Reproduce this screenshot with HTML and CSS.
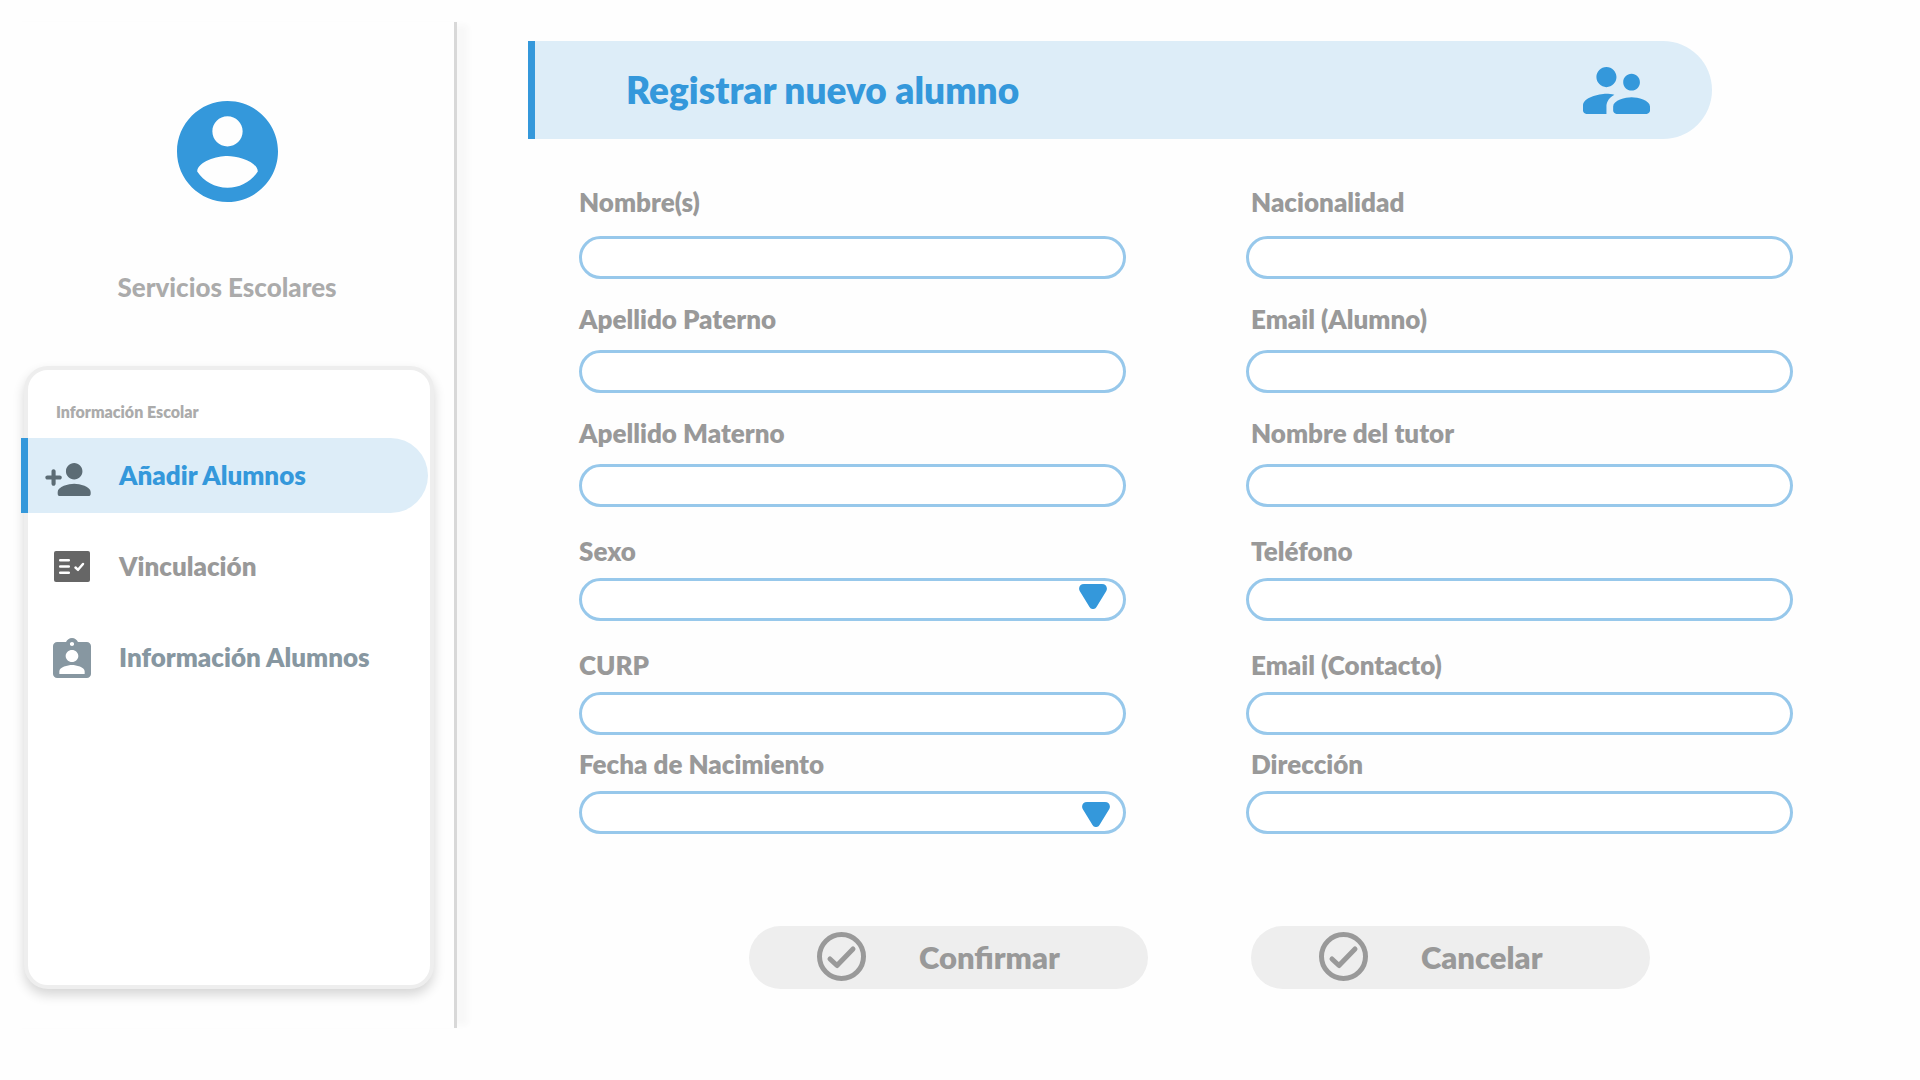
FILE: index.html
```html
<!DOCTYPE html>
<html lang="es">
<head>
<meta charset="utf-8">
<meta name="viewport" content="width=device-width, initial-scale=1">
<title>Registrar nuevo alumno</title>
<link rel="stylesheet" href="styles.css">
</head>
<body>
<div class="page">
  <aside class="sidebar">
    <div class="profile">
      <svg class="profile-icon" viewBox="2 2 20 20" aria-hidden="true"><path d="M12 2C6.48 2 2 6.48 2 12s4.48 10 10 10 10-4.48 10-10S17.52 2 12 2zm0 3c1.66 0 3 1.34 3 3s-1.34 3-3 3-3-1.34-3-3 1.34-3 3-3zm0 14.2c-2.5 0-4.71-1.28-6-3.22.03-1.99 4-3.08 6-3.08 1.99 0 5.97 1.09 6 3.08-1.29 1.94-3.5 3.22-6 3.22z"/></svg>
      <p class="profile-name">Servicios Escolares</p>
    </div>
    <nav class="menu" aria-labelledby="menu-title">
      <h2 class="menu-title" id="menu-title">Información Escolar</h2>
      <a class="menu-item menu-item-active" href="#alumnos" aria-current="page">
        <span class="menu-icon"><svg width="46" height="33" viewBox="1 4 22 16" aria-hidden="true"><path d="M15 12c2.21 0 4-1.79 4-4s-1.79-4-4-4-4 1.79-4 4 1.79 4 4 4zm-9-2V8c0-.55-.45-1-1-1s-1 .45-1 1v2H2c-.55 0-1 .45-1 1s.45 1 1 1h2v2c0 .55.45 1 1 1s1-.45 1-1v-2h2c.55 0 1-.45 1-1s-.45-1-1-1H6zm9 4c-2.67 0-8 1.34-8 4v1c0 .55.45 1 1 1h14c.55 0 1-.45 1-1v-1c0-2.66-5.33-4-8-4z"/></svg></span>
        <span class="menu-label">Añadir Alumnos</span>
      </a>
      <a class="menu-item" href="#vinculacion">
        <span class="menu-icon"><svg width="38" height="31" viewBox="-1 0 38 31" aria-hidden="true"><rect width="36" height="31" rx="2"/><path class="mark" d="M6.200 9.200h8.600M6.200 15.500h8.600M6.200 21.800h8.600M21.500 16.500l2.500 2.300 5-5.800"/></svg></span>
        <span class="menu-label">Vinculación</span>
      </a>
      <a class="menu-item menu-item-info" href="#informacion">
        <span class="menu-icon"><svg width="38" height="40" viewBox="3 1 18 20" preserveAspectRatio="none" aria-hidden="true"><path d="M19 3h-4.180C14.400 1.840 13.300 1 12 1s-2.400.84-2.820 2H5c-1.100 0-2 .9-2 2v14c0 1.100.9 2 2 2h14c1.100 0 2-.9 2-2V5c0-1.100-.9-2-2-2zm-7 0c.55 0 1 .45 1 1s-.45 1-1 1-1-.45-1-1 .45-1 1-1zm0 4c1.660 0 3 1.340 3 3s-1.340 3-3 3-3-1.340-3-3 1.340-3 3-3zm6 12H6v-1.400c0-2 4-3.100 6-3.100s6 1.100 6 3.100V19z"/></svg></span>
        <span class="menu-label">Información Alumnos</span>
      </a>
    </nav>
  </aside>

  <main class="content">
    <header class="banner">
      <h1 class="banner-title">Registrar nuevo alumno</h1>
      <svg class="banner-icon" viewBox="2 5 20 14" aria-hidden="true"><path d="M16.500 12c1.380 0 2.490-1.120 2.490-2.500S17.880 7 16.500 7 14 8.120 14 9.500s1.120 2.500 2.500 2.500zM9 11c1.660 0 2.990-1.340 2.990-3S10.660 5 9 5 6 6.340 6 8s1.340 3 3 3zm7.500 3c-1.830 0-5.500.92-5.500 2.750V18c0 .55.45 1 1 1h9c.55 0 1-.45 1-1v-1.250c0-1.830-3.670-2.750-5.500-2.750zM9 13c-2.330 0-7 1.170-7 3.500V18c0 .55.45 1 1 1h6v-2.250c0-.85.33-2.340 2.370-3.470C10.500 13.100 9.660 13 9 13z"/></svg>
    </header>

    <form class="form">
      <div class="fields">
        <div class="field field-loose"><label for="nombre">Nombre(s)</label><input class="control" id="nombre" type="text"></div>
        <div class="field field-loose"><label for="nacionalidad">Nacionalidad</label><input class="control" id="nacionalidad" type="text"></div>
        <div class="field"><label for="paterno">Apellido Paterno</label><input class="control" id="paterno" type="text"></div>
        <div class="field"><label for="email-alumno">Email (Alumno)</label><input class="control" id="email-alumno" type="email"></div>
        <div class="field"><label for="materno">Apellido Materno</label><input class="control" id="materno" type="text"></div>
        <div class="field"><label for="tutor">Nombre del tutor</label><input class="control" id="tutor" type="text"></div>
        <div class="field field-tight"><label for="sexo">Sexo</label>
          <div class="select"><select class="control" id="sexo"><option></option></select>
            <svg class="arrow" viewBox="0 0 28 25" aria-hidden="true"><path d="M5 0h18c4 0 6 3.500 4.300 7L17.500 23c-1.500 2.700-5.500 2.700-7 0L.7 7C-1 3.500 1 0 5 0z"/></svg></div>
        </div>
        <div class="field field-tight"><label for="telefono">Teléfono</label><input class="control" id="telefono" type="tel"></div>
        <div class="field field-tight"><label for="curp">CURP</label><input class="control" id="curp" type="text"></div>
        <div class="field field-tight"><label for="email-contacto">Email (Contacto)</label><input class="control" id="email-contacto" type="email"></div>
        <div class="field field-tight"><label for="fecha">Fecha de Nacimiento</label>
          <div class="select"><select class="control" id="fecha"><option></option></select>
            <svg class="arrow arrow-low" viewBox="0 0 28 25" aria-hidden="true"><path d="M5 0h18c4 0 6 3.500 4.300 7L17.500 23c-1.500 2.700-5.500 2.700-7 0L.7 7C-1 3.500 1 0 5 0z"/></svg></div>
        </div>
        <div class="field field-tight"><label for="direccion">Dirección</label><input class="control" id="direccion" type="text"></div>
      </div>

      <div class="actions">
        <button class="button" type="button">
          <svg class="button-icon" viewBox="0 0 49 49" aria-hidden="true"><circle cx="24.500" cy="24.500" r="22"/><path d="M13 27l7 6.500L36 17"/></svg>
          <span>Confirmar</span>
        </button>
        <button class="button" type="button">
          <svg class="button-icon" viewBox="0 0 49 49" aria-hidden="true"><circle cx="24.500" cy="24.500" r="22"/><path d="M13 27l7 6.500L36 17"/></svg>
          <span>Cancelar</span>
        </button>
      </div>
    </form>
  </main>
</div>
</body>
</html>
```
FILE: styles.css
```css
:root {
  --blue: #3498db;
  --blue-soft: #ddedf8;
  --blue-line: #97c8eb;
  --gray: #999;
  --gray-light: #ababab;
  --gray-fill: #eee;
}

* {
  box-sizing: border-box;
}

body {
  margin: 0;
  background: #fefefe;
  color: var(--gray);
  font-family: Lato, "Open Sans", sans-serif;
  font-size: 26px;
  font-weight: 800;
  line-height: 32px;
}

h1,
h2,
p {
  margin: 0;
}

.page {
  display: flex;
  min-height: 100vh;
}

/* Sidebar */
.sidebar {
  display: flex;
  flex: 0 0 457px;
  flex-direction: column;
  margin: 22px 0 52px;
  padding: 79px 20px 39px 24px;
  border-right: 3px solid #d8d8d8;
  box-shadow: 14px 0 6px -3px #f8f8f8;
}

.profile {
  display: flex;
  flex-direction: column;
  align-items: center;
  gap: 69px;
  padding: 0 4px 63px 0;
}

.profile-icon {
  width: 101px;
  height: 101px;
  fill: var(--blue);
}

.profile-name {
  color: var(--gray-light);
  font-weight: 900;
}

.menu {
  display: flex;
  flex: 1;
  flex-direction: column;
  gap: 16px;
  padding-top: 32px;
  border: 4px solid var(--gray-fill);
  border-radius: 24px;
  background: #fff;
  box-shadow: 0 6px 12px rgba(0, 0, 0, 0.16);
}

.menu-title {
  padding-left: 28px;
  color: var(--gray-light);
  font-size: 16px;
  font-weight: 800;
  line-height: 20px;
}

.menu-item {
  display: flex;
  align-items: center;
  gap: 28px;
  height: 75px;
  color: var(--gray);
  text-decoration: none;
}

.menu-item-active {
  margin: 0 2px 0 -7px;
  border-left: 7px solid var(--blue);
  border-radius: 0 38px 38px 0;
  background: var(--blue-soft);
  color: var(--blue);
}

.menu-item-info {
  color: #8797a1;
}

.menu-label {
  padding-bottom: 2px;
}

.menu-icon {
  display: flex;
  flex: 0 0 63px;
  justify-content: flex-end;
  fill: #666;
}

.menu-item-active .menu-icon {
  padding-top: 8px;
  fill: #5c6c75;
}

.menu-item-info .menu-icon {
  fill: #8797a1;
}

.mark {
  fill: none;
  stroke: #fff;
  stroke-linecap: round;
  stroke-linejoin: round;
  stroke-width: 2.5;
}

/* Main area */
.content {
  flex: 1;
  padding: 41px 127px 91px 71px;
}

.banner {
  display: flex;
  align-items: center;
  justify-content: space-between;
  height: 98px;
  margin-right: 81px;
  padding: 0 62px 0 91px;
  border-left: 7px solid var(--blue);
  border-radius: 0 49px 49px 0;
  background: var(--blue-soft);
  color: var(--blue);
}

.banner-title {
  font-size: 37px;
  font-weight: 800;
  line-height: 44px;
}

.banner-icon {
  width: 67px;
  height: 47px;
  fill: var(--blue);
}

.fields {
  display: grid;
  grid-template-columns: 1fr 1fr;
  grid-template-rows: 140px repeat(4, 114px) 99px;
  column-gap: 120px;
  margin-left: 51px;
}

.field {
  display: flex;
  flex-direction: column;
  justify-content: flex-end;
  gap: 15px;
}

.field-loose {
  gap: 18px;
}

.field-tight {
  gap: 11px;
}

.field:nth-child(even) label {
  padding-left: 5px;
}

.control {
  display: block;
  width: 100%;
  height: 43px;
  margin: 0;
  padding: 0 20px;
  border: 3px solid var(--blue-line);
  border-radius: 22px;
  background: #fff;
  color: var(--gray);
  font: inherit;
  appearance: none;
}

.select {
  position: relative;
}

.arrow {
  position: absolute;
  top: 6px;
  right: 19px;
  width: 28px;
  height: 25px;
  fill: var(--blue);
  pointer-events: none;
}

.arrow-low {
  top: 11px;
  right: 16px;
}

.actions {
  display: flex;
  gap: 103px;
  margin: 92px 143px 0 221px;
}

.button {
  display: flex;
  flex: 1;
  align-items: center;
  gap: 53px;
  height: 63px;
  padding: 0 68px 2px;
  border: 0;
  border-radius: 32px;
  background: var(--gray-fill);
  color: var(--gray);
  font: inherit;
  font-size: 31px;
}

.button-icon {
  flex: none;
  width: 49px;
  height: 49px;
  fill: none;
  stroke: var(--gray);
  stroke-linecap: round;
  stroke-linejoin: round;
  stroke-width: 5;
}
```
